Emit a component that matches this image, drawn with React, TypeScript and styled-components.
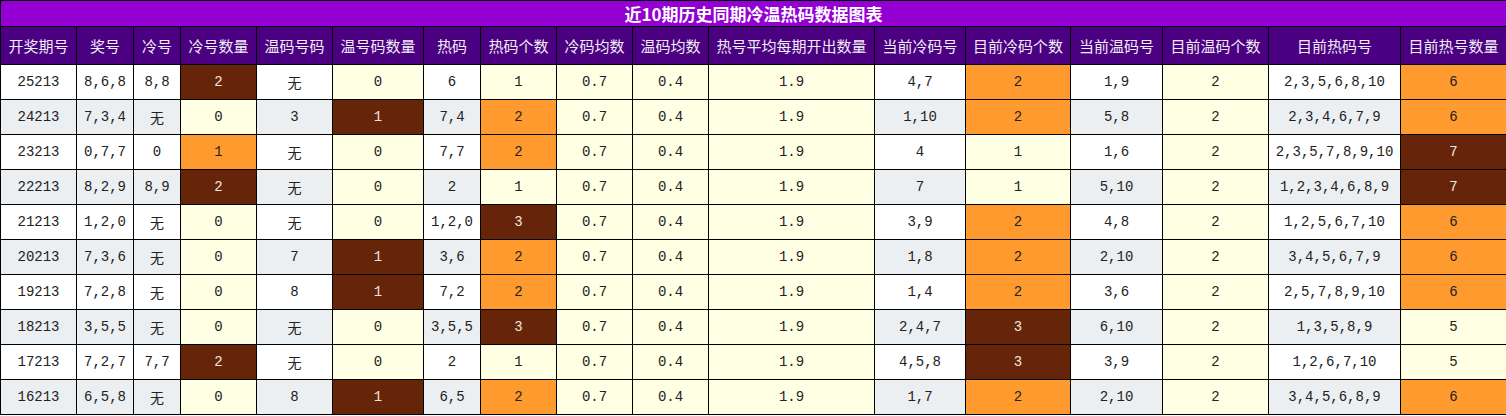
import React from "react";
import styled, { createGlobalStyle } from "styled-components";

const Global = createGlobalStyle`
  html, body { margin: 0; padding: 0; background: #fff; }
  body { font-family: "Liberation Mono", "Noto Sans CJK SC", monospace; }
`;

type Tone = "base" | "low" | "mid" | "high";

const toneBg = (t: Tone, alt: boolean) => {
  switch (t) {
    case "low":
      return "#ffffe3";
    case "mid":
      return "#ff9a2e";
    case "high":
      return "#662508";
    default:
      return alt ? "#ebeff2" : "#ffffff";
  }
};

const Table = styled.table`
  width: 1506px;
  table-layout: fixed;
  border-collapse: collapse;
  border: 1px solid #000;
`;

const TitleCell = styled.th`
  height: 25px;
  padding: 0;
  background: #9400d3;
  color: #fff;
  border: 1px solid #000;
  font-family: "Noto Sans CJK SC", "Liberation Sans", sans-serif;
  font-size: 17px;
  font-weight: 700;
  line-height: 25px;
  text-align: center;
`;

const HeadCell = styled.th`
  height: 37px;
  padding: 0;
  background: #4b0082;
  color: #f0eef4;
  border: 1px solid #000;
  font-family: "Noto Sans CJK SC", "Liberation Sans", sans-serif;
  font-size: 15px;
  font-weight: 400;
  text-align: center;
  white-space: nowrap;
`;

const Cell = styled.td<{ $tone: Tone; $alt: boolean }>`
  height: 34px;
  padding: 0;
  border: 1px solid #000;
  background: ${(p) => toneBg(p.$tone, p.$alt)};
  color: ${(p) => (p.$tone === "high" ? "#eee8e0" : "#222")};
  font-family: "Liberation Mono", "Noto Sans CJK SC", monospace;
  font-size: 14px;
  text-align: center;
  white-space: nowrap;
`;

const widths = [76, 57, 47, 76, 76, 91, 57, 76, 76, 76, 166, 91, 105, 92, 106, 132, 106];

const headers = [
  "开奖期号",
  "奖号",
  "冷号",
  "冷号数量",
  "温码号码",
  "温号码数量",
  "热码",
  "热码个数",
  "冷码均数",
  "温码均数",
  "热号平均每期开出数量",
  "当前冷码号",
  "目前冷码个数",
  "当前温码号",
  "目前温码个数",
  "目前热码号",
  "目前热号数量",
];

type Row = {
  issue: string;
  prize: string;
  cold: string;
  coldN: number;
  warm: string;
  warmN: number;
  hot: string;
  hotN: number;
  curCold: string;
  curColdN: number;
  curWarm: string;
  curHot: string;
  curHotN: number;
};

const rows: Row[] = [
  { issue: "25213", prize: "8,6,8", cold: "8,8", coldN: 2, warm: "无", warmN: 0, hot: "6", hotN: 1, curCold: "4,7", curColdN: 2, curWarm: "1,9", curHot: "2,3,5,6,8,10", curHotN: 6 },
  { issue: "24213", prize: "7,3,4", cold: "无", coldN: 0, warm: "3", warmN: 1, hot: "7,4", hotN: 2, curCold: "1,10", curColdN: 2, curWarm: "5,8", curHot: "2,3,4,6,7,9", curHotN: 6 },
  { issue: "23213", prize: "0,7,7", cold: "0", coldN: 1, warm: "无", warmN: 0, hot: "7,7", hotN: 2, curCold: "4", curColdN: 1, curWarm: "1,6", curHot: "2,3,5,7,8,9,10", curHotN: 7 },
  { issue: "22213", prize: "8,2,9", cold: "8,9", coldN: 2, warm: "无", warmN: 0, hot: "2", hotN: 1, curCold: "7", curColdN: 1, curWarm: "5,10", curHot: "1,2,3,4,6,8,9", curHotN: 7 },
  { issue: "21213", prize: "1,2,0", cold: "无", coldN: 0, warm: "无", warmN: 0, hot: "1,2,0", hotN: 3, curCold: "3,9", curColdN: 2, curWarm: "4,8", curHot: "1,2,5,6,7,10", curHotN: 6 },
  { issue: "20213", prize: "7,3,6", cold: "无", coldN: 0, warm: "7", warmN: 1, hot: "3,6", hotN: 2, curCold: "1,8", curColdN: 2, curWarm: "2,10", curHot: "3,4,5,6,7,9", curHotN: 6 },
  { issue: "19213", prize: "7,2,8", cold: "无", coldN: 0, warm: "8", warmN: 1, hot: "7,2", hotN: 2, curCold: "1,4", curColdN: 2, curWarm: "3,6", curHot: "2,5,7,8,9,10", curHotN: 6 },
  { issue: "18213", prize: "3,5,5", cold: "无", coldN: 0, warm: "无", warmN: 0, hot: "3,5,5", hotN: 3, curCold: "2,4,7", curColdN: 3, curWarm: "6,10", curHot: "1,3,5,8,9", curHotN: 5 },
  { issue: "17213", prize: "7,2,7", cold: "7,7", coldN: 2, warm: "无", warmN: 0, hot: "2", hotN: 1, curCold: "4,5,8", curColdN: 3, curWarm: "3,9", curHot: "1,2,6,7,10", curHotN: 5 },
  { issue: "16213", prize: "6,5,8", cold: "无", coldN: 0, warm: "8", warmN: 1, hot: "6,5", hotN: 2, curCold: "1,7", curColdN: 2, curWarm: "2,10", curHot: "3,4,5,6,8,9", curHotN: 6 },
];

const coldTone = (n: number): Tone => (n === 0 ? "low" : n === 1 ? "mid" : "high");
const warmTone = (n: number): Tone => (n === 0 ? "low" : "high");
const hotTone = (n: number): Tone => (n <= 1 ? "low" : n === 2 ? "mid" : "high");
const curColdTone = (n: number): Tone => (n <= 1 ? "low" : n === 2 ? "mid" : "high");
const curHotTone = (n: number): Tone => (n <= 5 ? "low" : n === 6 ? "mid" : "high");

export default function App() {
  return (
    <>
      <Global />
      <Table>
        <colgroup>
          {widths.map((w, i) => (
            <col key={i} style={{ width: w }} />
          ))}
        </colgroup>
        <thead>
          <tr>
            <TitleCell colSpan={17}>近10期历史同期冷温热码数据图表</TitleCell>
          </tr>
          <tr>
            {headers.map((h) => (
              <HeadCell key={h}>{h}</HeadCell>
            ))}
          </tr>
        </thead>
        <tbody>
          {rows.map((r, i) => {
            const alt = i % 2 === 1;
            const cells: [string | number, Tone][] = [
              [r.issue, "base"],
              [r.prize, "base"],
              [r.cold, "base"],
              [r.coldN, coldTone(r.coldN)],
              [r.warm, "base"],
              [r.warmN, warmTone(r.warmN)],
              [r.hot, "base"],
              [r.hotN, hotTone(r.hotN)],
              ["0.7", "low"],
              ["0.4", "low"],
              ["1.9", "low"],
              [r.curCold, "base"],
              [r.curColdN, curColdTone(r.curColdN)],
              [r.curWarm, "base"],
              [2, "low"],
              [r.curHot, "base"],
              [r.curHotN, curHotTone(r.curHotN)],
            ];
            return (
              <tr key={r.issue}>
                {cells.map(([v, t], j) => (
                  <Cell key={j} $tone={t} $alt={alt}>
                    {v}
                  </Cell>
                ))}
              </tr>
            );
          })}
        </tbody>
      </Table>
    </>
  );
}
